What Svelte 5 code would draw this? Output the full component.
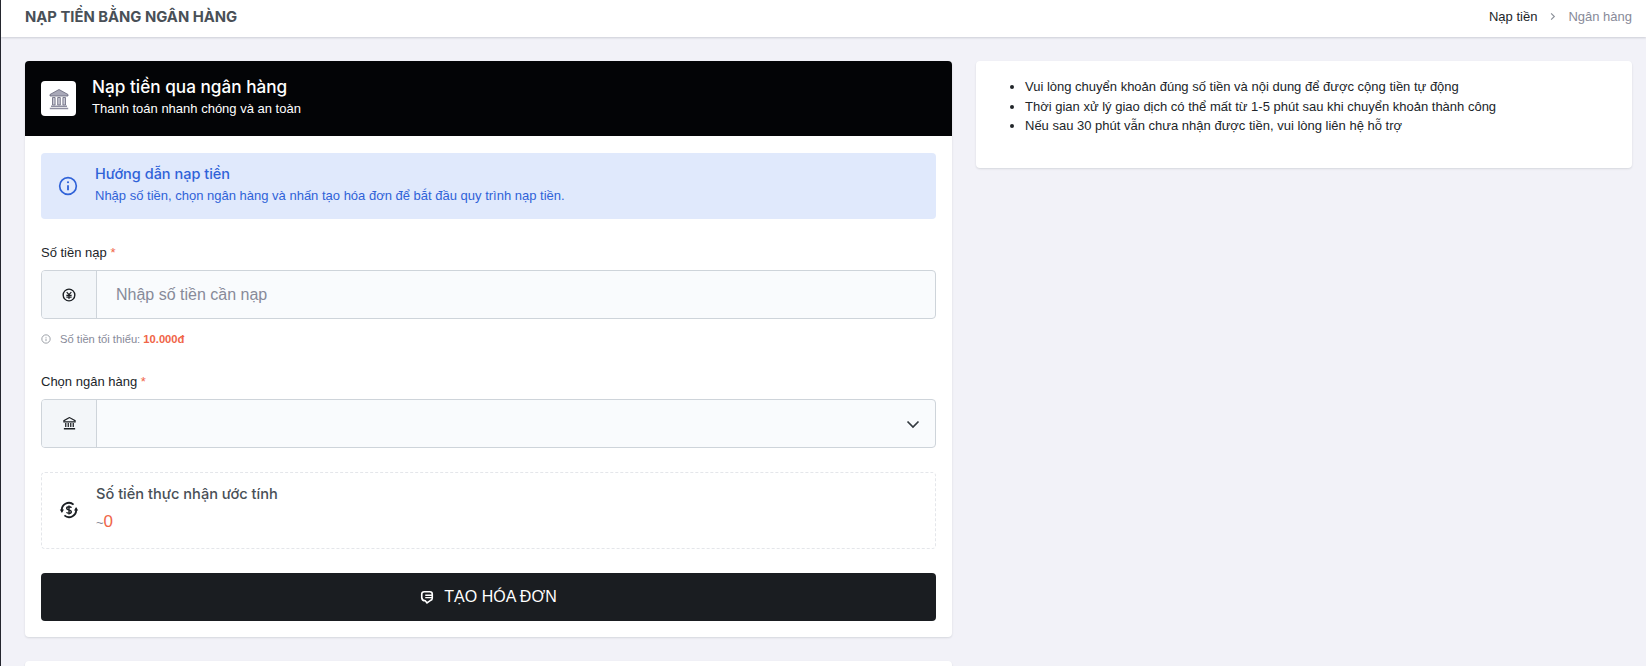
<script lang="ts">
  const notes = [
    'Vui lòng chuyển khoản đúng số tiền và nội dung để được cộng tiền tự động',
    'Thời gian xử lý giao dịch có thể mất từ 1-5 phút sau khi chuyển khoản thành công',
    'Nếu sau 30 phút vẫn chưa nhận được tiền, vui lòng liên hệ hỗ trợ'
  ];
</script>

<div class="page">
  <header class="topbar">
    <h1>NẠP TIỀN BẰNG NGÂN HÀNG</h1>
    <nav class="crumbs">
      <span>Nạp tiền</span>
      <svg viewBox="0 0 24 24" width="11" height="11" aria-hidden="true"><path d="M9 5l7 7-7 7" fill="none" stroke="#8a8f98" stroke-width="2.4"/></svg>
      <span class="muted">Ngân hàng</span>
    </nav>
  </header>

  <main class="content">
    <div class="left">
      <section class="card form-card">
        <div class="card-head">
          <div class="head-icon">
            <svg viewBox="0 0 24 24" width="24" height="24" aria-hidden="true">
              <path d="M12 2.500 3 7.500v1.500h18V7.500z" fill="#a9a9b8" stroke="#66667a" stroke-width=".8"/>
              <path d="M5.500 10.500h2.600v7.500H5.500zM10.700 10.500h2.600v7.500h-2.600zM15.900 10.500h2.600v7.500h-2.600z" fill="#c9c9d4" stroke="#66667a" stroke-width=".8"/>
              <path d="M4 18.500h16v1.500H4zM2.800 20.700h18.400v1.500H2.800z" fill="#8e8ea0"/>
            </svg>
          </div>
          <div class="head-text">
            <h2>Nạp tiền qua ngân hàng</h2>
            <p>Thanh toán nhanh chóng và an toàn</p>
          </div>
        </div>

        <div class="card-body">
          <div class="alert">
            <svg viewBox="0 0 24 24" width="20" height="20" aria-hidden="true">
              <circle cx="12" cy="12" r="10" fill="none" stroke="#2f62d8" stroke-width="2"/>
              <path d="M12 11v6" stroke="#2f62d8" stroke-width="2.200" fill="none"/>
              <circle cx="12" cy="7.500" r="1.300" fill="#2f62d8"/>
            </svg>
            <div>
              <div class="alert-title">Hướng dẫn nạp tiền</div>
              <div class="alert-text">Nhập số tiền, chọn ngân hàng và nhấn tạo hóa đơn để bắt đầu quy trình nạp tiền.</div>
            </div>
          </div>

          <label class="field-label" for="amount">Số tiền nạp <span class="req">*</span></label>
          <div class="input-group">
            <span class="addon">
              <svg viewBox="0 0 24 24" width="14" height="14" aria-hidden="true">
                <circle cx="12" cy="12" r="10" fill="none" stroke="#1b1f23" stroke-width="2.400"/>
                <path d="M8 7l4 4.500L16 7M7.500 12.500h9M7.500 15.500h9M12 11.500V19" fill="none" stroke="#1b1f23" stroke-width="2"/>
              </svg>
            </span>
            <input id="amount" placeholder="Nhập số tiền cần nạp" />
          </div>
          <div class="hint">
            <svg viewBox="0 0 24 24" width="10" height="10" aria-hidden="true">
              <circle cx="12" cy="12" r="10" fill="none" stroke="#8a8f98" stroke-width="2"/>
              <path d="M12 11v6M12 7v2" stroke="#8a8f98" stroke-width="2"/>
            </svg>
            <span>Số tiền tối thiểu: <b>10.000đ</b></span>
          </div>

          <label class="field-label second" for="bank">Chọn ngân hàng <span class="req">*</span></label>
          <div class="input-group">
            <span class="addon">
              <svg viewBox="0 0 24 24" width="15" height="15" aria-hidden="true">
                <path d="M12 2.500 3 7.500v1.800h18V7.500z" fill="none" stroke="#1b1f23" stroke-width="1.800"/>
                <path d="M6 11v6.500M10 11v6.500M14 11v6.500M18 11v6.500" stroke="#1b1f23" stroke-width="2"/>
                <path d="M3 20.500h18" stroke="#1b1f23" stroke-width="2.400"/>
              </svg>
            </span>
            <div class="select" id="bank">
              <svg viewBox="0 0 16 16" width="16" height="16" aria-hidden="true"><path d="M2.500 5.500 8 11l5.500-5.500" fill="none" stroke="#343a40" stroke-width="1.700"/></svg>
            </div>
          </div>

          <div class="estimate">
            <svg class="est-icon" viewBox="0 0 24 24" width="20" height="20" aria-hidden="true">
              <path d="M3.600 13.500A8.500 8.500 0 0 1 17.500 5.500M20.400 10.500A8.500 8.500 0 0 1 6.500 18.500" fill="none" stroke="#1b1f23" stroke-width="2.200"/>
              <path d="M1 11.500l2.500 4 2.500-4zM23 12.500l-2.500-4-2.500 4z" fill="#1b1f23"/>
              <path d="M15 9.300c-.5-.9-1.500-1.300-3-1.300-1.700 0-2.800.7-2.800 1.900 0 2.700 5.600 1.400 5.600 4.100 0 1.300-1.100 2-2.800 2-1.500 0-2.500-.4-3-1.300M12 6.500v11" fill="none" stroke="#1b1f23" stroke-width="1.700"/>
            </svg>
            <div class="est-text">
              <div class="est-label">Số tiền thực nhận ước tính</div>
              <div class="est-value"><span class="tilde">~</span>0</div>
            </div>
          </div>

          <button type="button" class="submit">
            <svg viewBox="0 0 24 24" width="14" height="14" aria-hidden="true">
              <path d="M7 3h10a4 4 0 0 1 4 4v7a4 4 0 0 1-3 3.800L12 22l-3-3.500A6 6 0 0 1 3 13V7a4 4 0 0 1 4-4z" fill="none" stroke="#fff" stroke-width="2.800"/>
              <path d="M9 9h12M9 13h12" stroke="#fff" stroke-width="2.200"/>
            </svg>
            TẠO HÓA ĐƠN
          </button>
        </div>
      </section>
      <section class="card next-card"></section>
    </div>

    <aside class="card side-card">
      <ul>
        {#each notes as note}
          <li>{note}</li>
        {/each}
      </ul>
    </aside>
  </main>
</div>

<style>
  :global(body) {
    margin: 0;
    background: #f2f2f8;
    font-family: "Liberation Sans", Roboto, sans-serif;
    color: #212529;
    overflow: hidden;
  }

  .page {
    height: 666px;
    overflow: hidden;
    border-left: 1px solid #24262e;
  }

  .topbar {
    height: 37px;
    box-sizing: border-box;
    background: #fff;
    display: flex;
    align-items: center;
    justify-content: space-between;
    padding: 0 14px 4px 24px;
    box-shadow: 0 1px 2px rgba(56, 65, 74, 0.2);
  }

  h1 {
    margin: 0;
    font: 700 14.800px Inter, sans-serif;
    color: #495057;
  }

  .crumbs {
    display: flex;
    align-items: center;
    gap: 10px;
    font-size: 13px;
    color: #212529;
  }

  .muted {
    color: #878a99;
  }

  .content {
    display: grid;
    grid-template-columns: 927px 656px;
    column-gap: 24px;
    padding: 24px 0 0 24px;
    align-items: start;
  }

  .left {
    display: flex;
    flex-direction: column;
    gap: 24px;
  }

  .card {
    background: #fff;
    border-radius: 4px;
    box-shadow: 0 1px 2px rgba(56, 65, 74, 0.15);
  }

  .card-head {
    height: 75px;
    box-sizing: border-box;
    background: #030406;
    border-radius: 4px 4px 0 0;
    color: #fff;
    display: flex;
    align-items: center;
    gap: 16px;
    padding: 0 16px;
  }

  .head-text {
    margin-bottom: 5px;
  }

  .head-icon {
    width: 35px;
    height: 35px;
    background: #fff;
    border-radius: 4px;
    display: grid;
    place-items: center;
  }

  h2 {
    margin: 0 0 4px;
    font: 500 17.200px Inter, sans-serif;
  }

  .card-head p {
    margin: 0;
    font-size: 13px;
  }

  .card-body {
    padding: 17px 16px 16px;
  }

  .alert {
    height: 66px;
    box-sizing: border-box;
    background: #e0e9fc;
    border-radius: 4px;
    color: #2f62d8;
    display: flex;
    align-items: center;
    gap: 17px;
    padding: 0 17px 5px;
  }

  .alert > svg {
    margin-top: 5px;
  }

  .alert-title {
    font: 500 14.500px Inter, sans-serif;
    margin-bottom: 6px;
  }

  .alert-text {
    font-size: 13px;
  }

  .field-label {
    display: block;
    margin-top: 26px;
    margin-bottom: 9px;
    font-size: 13px;
    line-height: 16px;
  }

  .field-label.second {
    margin-top: 29px;
    margin-bottom: 9px;
  }

  .req {
    color: #f06548;
  }

  .input-group {
    display: flex;
    height: 49px;
    box-sizing: border-box;
    border: 1px solid #ced4da;
    border-radius: 4px;
    background: #f9fbfd;
    overflow: hidden;
  }

  .addon {
    width: 54px;
    flex: none;
    background: #f3f6f9;
    border-right: 1px solid #ced4da;
    display: grid;
    place-items: center;
  }

  input {
    flex: 1;
    min-width: 0;
    border: 0;
    outline: 0;
    background: transparent;
    padding: 0 19px;
    font: 16px "Liberation Sans", sans-serif;
  }

  input::placeholder {
    color: #878a99;
  }

  .select {
    flex: 1;
    display: flex;
    align-items: center;
    justify-content: flex-end;
    padding-right: 14px;
  }

  .hint {
    display: flex;
    align-items: center;
    gap: 9px;
    margin-top: 14px;
    font-size: 11.200px;
    color: #878a99;
  }

  .hint b {
    color: #f06548;
    font-weight: 700;
  }

  .estimate {
    margin-top: 24px;
    height: 77px;
    box-sizing: border-box;
    border: 1px dashed #e4e6ea;
    border-radius: 4px;
    display: flex;
    align-items: center;
    gap: 17px;
    padding: 0 17px;
  }

  .est-icon {
    margin-bottom: 2px;
  }

  .est-text {
    margin-bottom: 4px;
  }

  .est-label {
    font: 500 14.600px Inter, sans-serif;
    color: #495057;
    margin-bottom: 9px;
  }

  .est-value {
    font-size: 17px;
    color: #f06548;
  }

  .tilde {
    font-size: 13px;
    color: #878a99;
  }

  .submit {
    margin-top: 24px;
    width: 100%;
    height: 48px;
    border: 0;
    border-radius: 4px;
    background: #1a1d21;
    color: #fff;
    font: 400 16px "Liberation Sans", sans-serif;
    display: flex;
    align-items: center;
    justify-content: center;
    gap: 10px;
  }

  .next-card {
    height: 60px;
  }

  .side-card {
    height: 107px;
    box-sizing: border-box;
    padding: 16px 16px 16px 17px;
    font-size: 13px;
    line-height: 19.500px;
  }

  ul {
    margin: 0;
    padding-left: 32px;
  }
</style>
